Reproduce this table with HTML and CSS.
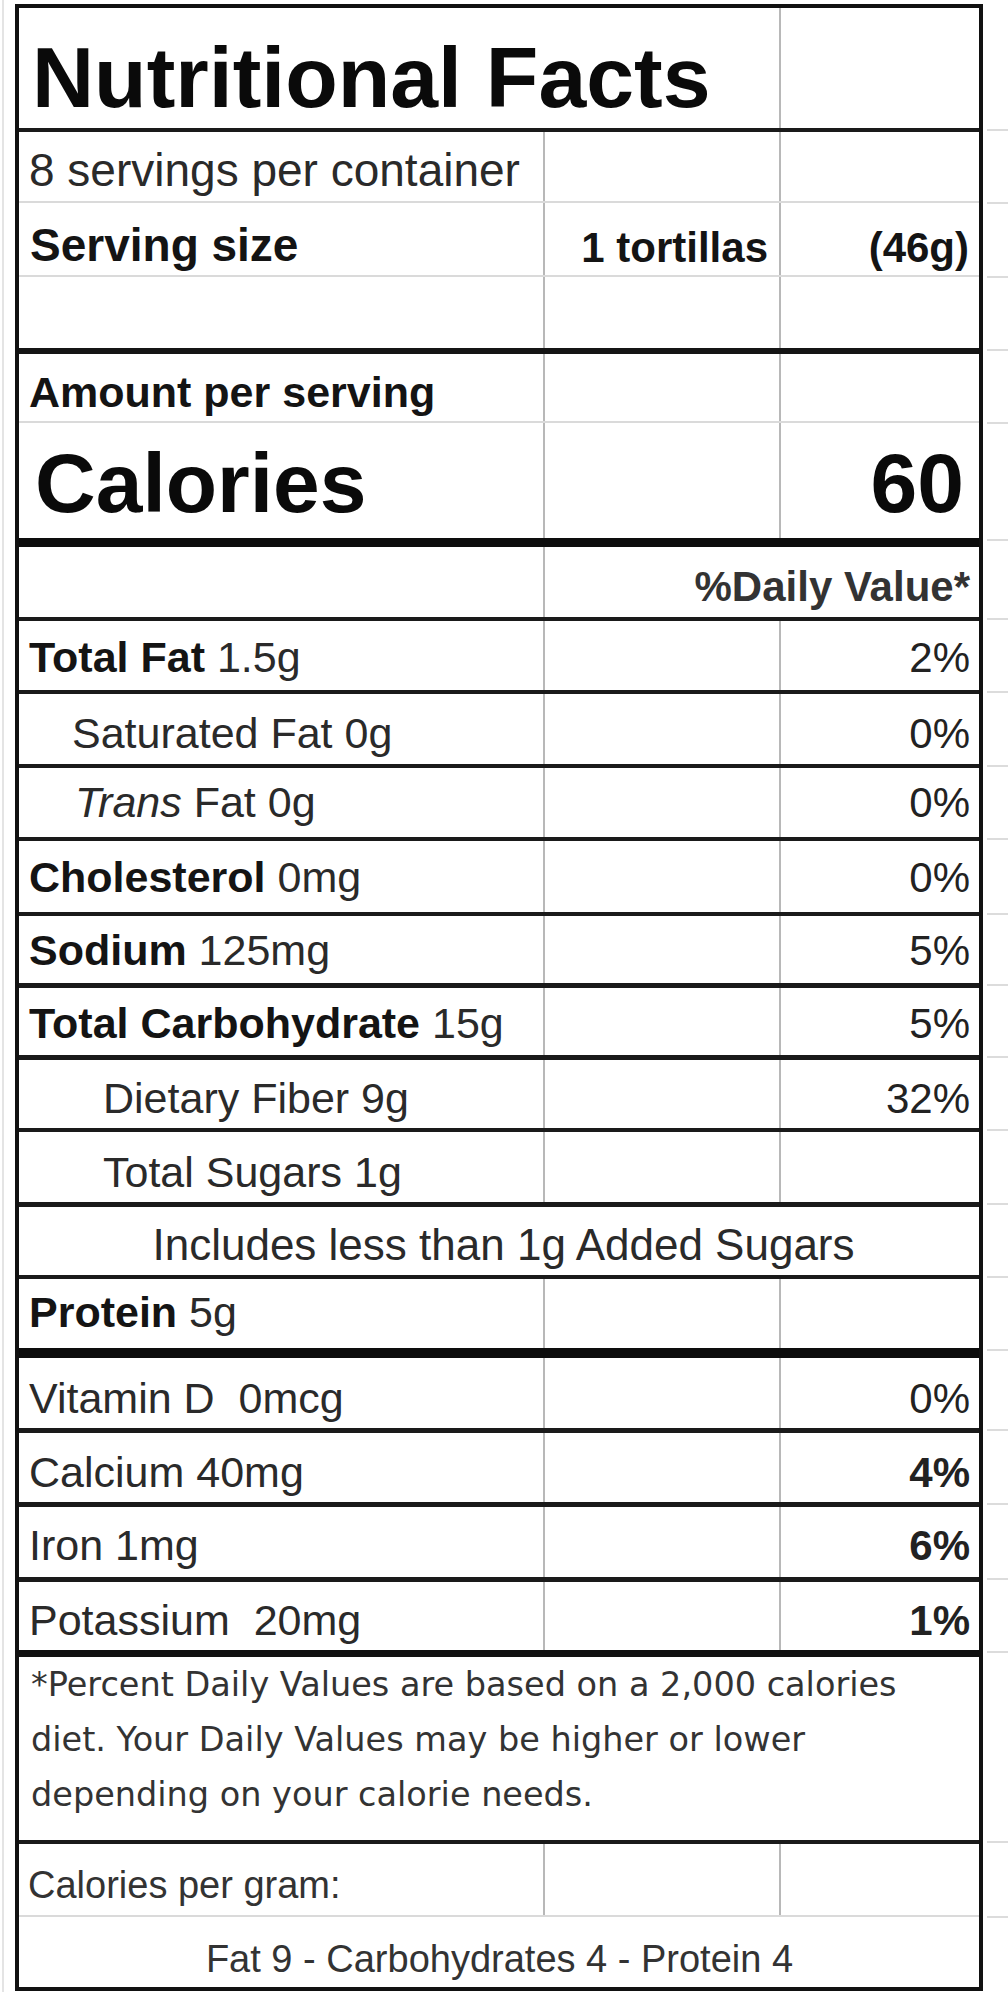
FILE: index.html
```html
<!DOCTYPE html>
<html lang="en">
<head>
<meta charset="utf-8">
<title>Nutritional Facts</title>
<link rel="stylesheet" href="styles.css">
</head>
<body>
<div class="sheet">
  <div class="label">
    <div class="row h124 pb1">
      <div class="c span2 title">Nutritional Facts</div>
      <div class="c c3"></div>
    </div>
    <div class="row h71 grid pb4">
      <div class="c big">8 servings per container</div>
      <div class="c c2"></div>
      <div class="c c3"></div>
    </div>
    <div class="row h74 grid pb3">
      <div class="c big b pl11">Serving size</div>
      <div class="c c2 b pr11">1 tortillas</div>
      <div class="c c3 b pr10">(46g)</div>
    </div>
    <div class="row h77 line6">
      <div class="c"></div>
      <div class="c c2"></div>
      <div class="c c3"></div>
    </div>
    <div class="row h69 grid pb4">
      <div class="c b">Amount per serving</div>
      <div class="c c2"></div>
      <div class="c c3"></div>
    </div>
    <div class="row h124 line9 pb6">
      <div class="c cal b pl16">Calories</div>
      <div class="c c2"></div>
      <div class="c c3 cal b pr15">60</div>
    </div>
    <div class="row h74 pb6">
      <div class="c"></div>
      <div class="c c2 span2 dv b">%Daily Value*</div>
    </div>
    <div class="row h73 pb8">
      <div class="c"><b>Total Fat</b>&nbsp;1.5g</div>
      <div class="c c2"></div>
      <div class="c c3 pct">2%</div>
    </div>
    <div class="row h74 pb6">
      <div class="c ind1">Saturated Fat 0g</div>
      <div class="c c2"></div>
      <div class="c c3 pct">0%</div>
    </div>
    <div class="row h73 pb10">
      <div class="c ind1t"><i>Trans</i>&nbsp;Fat 0g</div>
      <div class="c c2"></div>
      <div class="c c3 pct">0%</div>
    </div>
    <div class="row h75 pb10">
      <div class="c"><b>Cholesterol</b>&nbsp;0mg</div>
      <div class="c c2"></div>
      <div class="c c3 pct">0%</div>
    </div>
    <div class="row h72 line5 pb8">
      <div class="c"><b>Sodium</b>&nbsp;125mg</div>
      <div class="c c2"></div>
      <div class="c c3 pct">5%</div>
    </div>
    <div class="row h72 line5 pb7">
      <div class="c"><b>Total Carbohydrate</b>&nbsp;15g</div>
      <div class="c c2"></div>
      <div class="c c3 pct">5%</div>
    </div>
    <div class="row h72 pb5">
      <div class="c ind2">Dietary Fiber 9g</div>
      <div class="c c2"></div>
      <div class="c c3 pct">32%</div>
    </div>
    <div class="row h75 line5 pb5">
      <div class="c ind2">Total Sugars 1g</div>
      <div class="c c2"></div>
      <div class="c c3 pct"></div>
    </div>
    <div class="row h72 pb5">
      <div class="c span3 incl">Includes less than 1g Added Sugars</div>
    </div>
    <div class="row h79 line10 pb11">
      <div class="c"><b>Protein</b>&nbsp;5g</div>
      <div class="c c2"></div>
      <div class="c c3"></div>
    </div>
    <div class="row h75 line5 pb5">
      <div class="c">Vitamin D&nbsp;&nbsp;0mcg</div>
      <div class="c c2"></div>
      <div class="c c3 pct">0%</div>
    </div>
    <div class="row h74 line5 pb5">
      <div class="c">Calcium 40mg</div>
      <div class="c c2"></div>
      <div class="c c3 pct b">4%</div>
    </div>
    <div class="row h75 line5 pb7">
      <div class="c">Iron 1mg</div>
      <div class="c c2"></div>
      <div class="c c3 pct b">6%</div>
    </div>
    <div class="row h75 line7 pb5">
      <div class="c">Potassium&nbsp;&nbsp;20mg</div>
      <div class="c c2"></div>
      <div class="c c3 pct b">1%</div>
    </div>
    <div class="row h187 foot-row">
      <div class="c span3 foot">*Percent Daily Values are based on a 2,000 calories<br>diet. Your Daily Values may be higher or lower<br>depending on your calorie needs.</div>
    </div>
    <div class="row h73 grid pb8">
      <div class="c small pl9">Calories per gram:</div>
      <div class="c c2"></div>
      <div class="c c3"></div>
    </div>
    <div class="row h70 last pb6">
      <div class="c span3 small center">Fat 9 - Carbohydrates 4 - Protein 4</div>
    </div>
  </div>
</div>
</body>
</html>
```

FILE: styles.css
```css
html, body {
  margin: 0;
  padding: 0;
  background: #ffffff;
}

body {
  font-family: "Liberation Sans", Arial, sans-serif;
  color: #161616;
  overflow: hidden;
}

.sheet {
  margin-left: 2px;
  border-left: 2px solid #e4e4e4;
  padding-top: 4px;
  height: 1992px;
  box-sizing: border-box;
}

.label {
  margin-left: 11px;
  width: 968px;
  border: 4px solid #111;
  box-sizing: border-box;
  background: #fff;
}

.row {
  display: grid;
  grid-template-columns: 524px 236px 200px;
  box-sizing: border-box;
  border-bottom: 4px solid #1a1a1a;
  position: relative;
  --pb: 6px;
}

.row::after {
  content: "";
  position: absolute;
  left: 100%;
  margin-left: 8px;
  width: 22px;
  height: 2px;
  bottom: -3px;
  background: #dcdcdc;
}

.row.last::after { display: none; }

.row.grid { border-bottom: 2px solid #dadada; }
.row.line5 { border-bottom-width: 5px; }
.row.line6 { border-bottom-width: 6px; border-bottom-color: #151515; }
.row.line7 { border-bottom-width: 7px; border-bottom-color: #111; }
.row.line9 { border-bottom-width: 9px; border-bottom-color: #0d0d0d; }
.row.line10 { border-bottom-width: 10px; border-bottom-color: #0d0d0d; }
.row.last { border-bottom: none; }

.h69 { height: 69px; }
.h70 { height: 70px; }
.h71 { height: 71px; }
.h72 { height: 72px; }
.h73 { height: 73px; }
.h74 { height: 74px; }
.h75 { height: 75px; }
.h77 { height: 77px; }
.h79 { height: 79px; }
.h124 { height: 124px; }
.h187 { height: 187px; }

.pb1 { --pb: 1px; }
.pb3 { --pb: 3px; }
.pb4 { --pb: 4px; }
.pb5 { --pb: 5px; }
.pb6 { --pb: 6px; }
.pb7 { --pb: 7px; }
.pb8 { --pb: 8px; }
.pb10 { --pb: 10px; }
.pb11 { --pb: 11px; }

.c {
  display: flex;
  align-items: flex-end;
  box-sizing: border-box;
  padding: 0 9px var(--pb) 10px;
  font-size: 43px;
  line-height: normal;
  white-space: pre;
  min-width: 0;
  color: #2a2a2a;
}

.c b, .b {
  font-weight: 700;
  color: #141414;
}

.c i { font-style: italic; }

.c2, .c3 {
  border-left: 2px solid #b8b8b8;
  justify-content: flex-end;
}

.span2 { grid-column: span 2; }
.span3 { grid-column: 1 / -1; border-left: none; }

.title {
  font-size: 86px;
  font-weight: 700;
  color: #0a0a0a;
  padding-left: 13px;
}

.big { font-size: 46px; }
.c2.b, .c3.b { font-size: 42px; }
.c3.pct.b { font-size: 42px; }

.cal { font-size: 84px; }
.c3.cal { font-size: 84px; color: #0a0a0a; }
.cal.b { color: #0a0a0a; }

.dv {
  font-size: 38px;
  color: #333;
  padding-right: 9px;
}

.pct {
  font-size: 42px;
  padding-right: 9px;
  color: #222;
}

.pl9 { padding-left: 9px; }
.pl11 { padding-left: 11px; }
.pl16 { padding-left: 16px; }
.pr10 { padding-right: 10px; }
.pr11 { padding-right: 11px; }
.pr15 { padding-right: 15px; }

.ind1 { padding-left: 53px; }
.ind1t { padding-left: 56px; }
.ind2 { padding-left: 84px; }

.incl {
  justify-content: center;
  padding-left: 18px;
  font-size: 44px;
}

.foot-row .c {
  align-items: flex-start;
}

.foot {
  font-family: "DejaVu Sans", Verdana, sans-serif;
  font-size: 33.5px;
  line-height: 55px;
  color: #333;
  padding: 0 0 0 12px;
  white-space: normal;
  display: block;
}

.small {
  font-size: 38px;
  color: #333;
}

.center {
  justify-content: center;
}
```
